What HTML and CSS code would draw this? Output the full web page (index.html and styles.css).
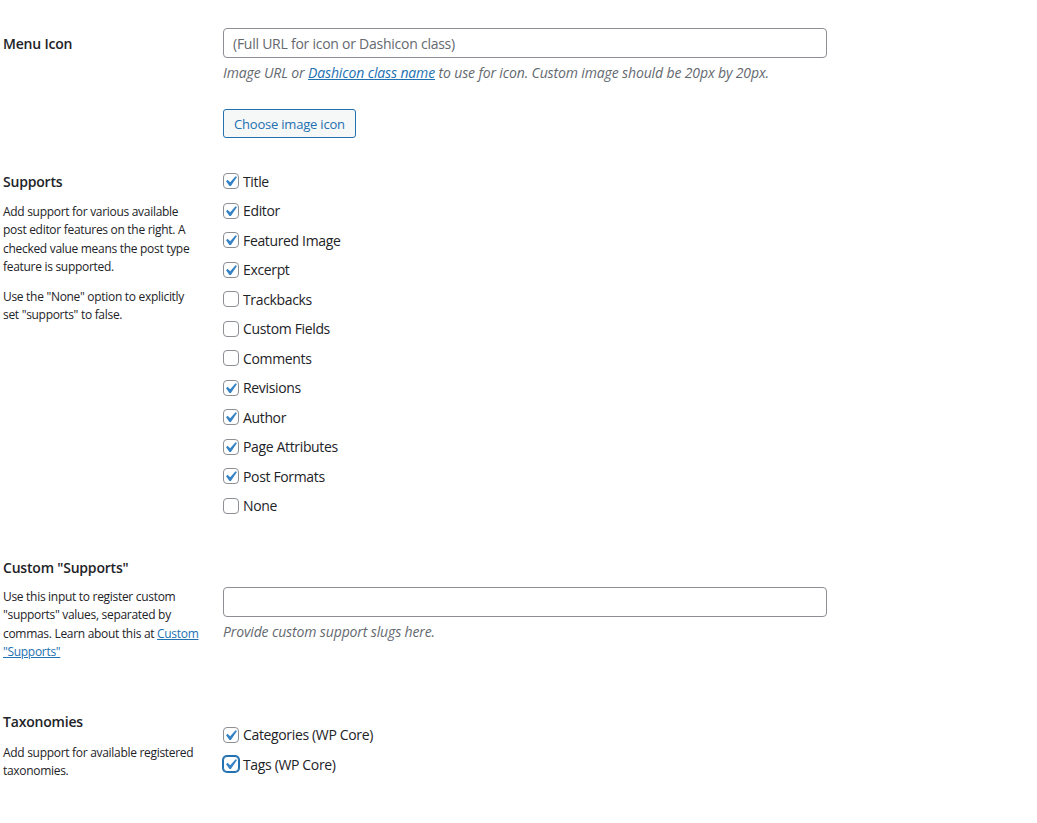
FILE: index.html
```html
<!DOCTYPE html>
<html lang="en">
<head>
    <meta charset="UTF-8">
    <title>Edit Post Type</title>
    <link rel="stylesheet" href="styles.css">
</head>
<body>

    <div class="form">
        <!-- Menu icon -->
        <div class="row row-icon">
            <div class="head">
                <label class="title" for="menu_icon">Menu Icon</label>
            </div>
            <div class="field">
                <input type="text" id="menu_icon" class="text-input" placeholder="(Full URL for icon or Dashicon class)">
                <p class="hint">Image URL or <a href="#">Dashicon class name</a> to use for icon. Custom image should be 20px by 20px.</p>
                <button type="button" class="button">Choose image icon</button>
            </div>
        </div>

        <!-- Supports -->
        <div class="row row-supports">
            <div class="head">
                <span class="title">Supports</span>
                <p class="desc">Add support for various available post editor features on the right. A checked value means the post type feature is supported.</p>
                <p class="desc">Use the "None" option to explicitly set "supports" to false.</p>
            </div>
            <div class="field">
                <ul class="checks">
                    <li><span class="box checked"><svg viewBox="0 0 20 20"><path d="M14.83 4.89l1.34.94-5.81 8.38H9.02L5.78 9.67l1.34-1.25 2.57 2.4z"/></svg></span>Title</li>
                    <li><span class="box checked"><svg viewBox="0 0 20 20"><path d="M14.83 4.89l1.34.94-5.81 8.38H9.02L5.78 9.67l1.34-1.25 2.57 2.4z"/></svg></span>Editor</li>
                    <li><span class="box checked"><svg viewBox="0 0 20 20"><path d="M14.83 4.89l1.34.94-5.81 8.38H9.02L5.78 9.67l1.34-1.25 2.57 2.4z"/></svg></span>Featured Image</li>
                    <li><span class="box checked"><svg viewBox="0 0 20 20"><path d="M14.83 4.89l1.34.94-5.81 8.38H9.02L5.78 9.67l1.34-1.25 2.57 2.4z"/></svg></span>Excerpt</li>
                    <li><span class="box"></span>Trackbacks</li>
                    <li><span class="box"></span>Custom Fields</li>
                    <li><span class="box"></span>Comments</li>
                    <li><span class="box checked"><svg viewBox="0 0 20 20"><path d="M14.83 4.89l1.34.94-5.81 8.38H9.02L5.78 9.67l1.34-1.25 2.57 2.4z"/></svg></span>Revisions</li>
                    <li><span class="box checked"><svg viewBox="0 0 20 20"><path d="M14.83 4.89l1.34.94-5.81 8.38H9.02L5.78 9.67l1.34-1.25 2.57 2.4z"/></svg></span>Author</li>
                    <li><span class="box checked"><svg viewBox="0 0 20 20"><path d="M14.83 4.89l1.34.94-5.81 8.38H9.02L5.78 9.67l1.34-1.25 2.57 2.4z"/></svg></span>Page Attributes</li>
                    <li><span class="box checked"><svg viewBox="0 0 20 20"><path d="M14.83 4.89l1.34.94-5.81 8.38H9.02L5.78 9.67l1.34-1.25 2.57 2.4z"/></svg></span>Post Formats</li>
                    <li><span class="box"></span>None</li>
                </ul>
            </div>
        </div>

        <!-- Custom supports -->
        <div class="row row-custom">
            <div class="head">
                <label class="title" for="custom_supports">Custom "Supports"</label>
                <p class="desc">Use this input to register custom "supports" values, separated by commas. Learn about this at <a href="#">Custom "Supports"</a></p>
            </div>
            <div class="field">
                <input type="text" id="custom_supports" class="text-input">
                <p class="hint">Provide custom support slugs here.</p>
            </div>
        </div>

        <!-- Taxonomies -->
        <div class="row row-tax">
            <div class="head">
                <span class="title">Taxonomies</span>
                <p class="desc">Add support for available registered taxonomies.</p>
            </div>
            <div class="field">
                <ul class="checks">
                    <li><span class="box checked"><svg viewBox="0 0 20 20"><path d="M14.83 4.89l1.34.94-5.81 8.38H9.02L5.78 9.67l1.34-1.25 2.57 2.4z"/></svg></span>Categories (WP Core)</li>
                    <li><span class="box checked focused"><svg viewBox="0 0 20 20"><path d="M14.83 4.89l1.34.94-5.81 8.38H9.02L5.78 9.67l1.34-1.25 2.57 2.4z"/></svg></span>Tags (WP Core)</li>
                </ul>
            </div>
        </div>
    </div>

</body>
</html>
```

FILE: styles.css
```css
* {
    margin: 0;
    padding: 0;
    box-sizing: border-box;
}

body {
    font-family: 'Open Sans', 'Noto Sans', sans-serif;
    background: #ffffff;
    color: #1d2327;
    font-size: 14px;
}

a {
    color: #2271b1;
}

.form {
    padding: 28px 0 40px 3px;
}

.row {
    display: grid;
    grid-template-columns: 220px 604px;
    align-items: start;
}

.row-supports {
    margin-top: 28.5px;
}

.row-custom {
    margin-top: 37.5px;
}

.row-tax {
    margin-top: 50.5px;
}

/* Left column: title and help text */
.title {
    display: block;
    font-size: 14px;
    font-weight: 600;
    line-height: 20px;
    letter-spacing: -0.2px;
}

.row-icon .head {
    padding-top: 6px;
}

.row-supports .head {
    padding-top: 5.5px;
}

.desc {
    font-size: 12px;
    line-height: 18.33px;
    letter-spacing: -0.3px;
    margin-top: 11px;
    padding-right: 23px;
}

.desc + .desc {
    margin-top: 11.5px;
}

.row-custom .desc {
    margin-top: 10px;
}

.row-tax .desc {
    margin-top: 12px;
}

/* Right column */
.row-custom .field {
    padding-top: 29px;
}

.row-tax .field {
    padding-top: 8.25px;
}

.text-input {
    display: block;
    width: 100%;
    height: 30px;
    padding: 0 9px;
    border: 1px solid #8c8f94;
    border-radius: 4px;
    background: #ffffff;
    color: #2c3338;
    font-family: inherit;
    font-size: 14px;
    letter-spacing: -0.25px;
}

.text-input::placeholder {
    color: #646970;
}

.hint {
    margin-top: 5px;
    line-height: 20px;
    font-size: 14px;
    font-style: italic;
    letter-spacing: -0.13px;
    color: #646970;
}

.button {
    display: block;
    margin-top: 26px;
    height: 29px;
    padding: 0 10px;
    border: 1px solid #2271b1;
    border-radius: 3px;
    background: #f6f7f7;
    color: #2271b1;
    font-family: inherit;
    font-size: 13px;
    letter-spacing: -0.2px;
    cursor: pointer;
}

.checks {
    list-style: none;
}

.checks li {
    display: flex;
    align-items: center;
    height: 29.5px;
    font-size: 14px;
    letter-spacing: -0.35px;
}

.box {
    position: relative;
    flex: none;
    width: 16px;
    height: 16px;
    margin-right: 4px;
    border: 1px solid #8c8f94;
    border-radius: 4px;
    background: #ffffff;
}

.box svg {
    position: absolute;
    left: -4px;
    top: -3px;
    width: 21px;
    height: 21px;
    fill: #3582c4;
}

.box.focused {
    border-color: #2271b1;
    box-shadow: 0 0 0 1px #2271b1;
}
```
